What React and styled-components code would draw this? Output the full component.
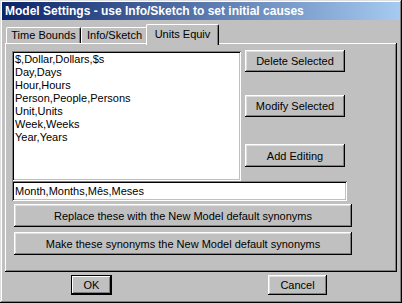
import React from "react";
import styled, { createGlobalStyle } from "styled-components";

const GlobalStyle = createGlobalStyle`
  html, body {
    margin: 0;
    padding: 0;
    background: #c0c0c0;
  }
  * {
    box-sizing: border-box;
  }
`;

const face = "#c0c0c0";

const Window = styled.div`
  width: 402px;
  height: 303px;
  background: ${face};
  font-family: "Liberation Sans", Arial, sans-serif;
  font-size: 11px;
  color: #000;
  box-shadow: inset -1px -1px #000, inset 1px 1px #dfdfdf,
    inset -2px -2px #808080, inset 2px 2px #fff;
  padding: 2px;
  display: flex;
  flex-direction: column;
`;

const TitleBar = styled.div`
  height: 18px;
  background: linear-gradient(to right, #0a246a, #a6caf0);
  color: #fff;
  font-family: "Liberation Sans", Arial, sans-serif;
  font-weight: bold;
  font-size: 12px;
  line-height: 18px;
  padding-left: 3px;
  white-space: nowrap;
  overflow: hidden;
`;

const Body = styled.div`
  padding: 4px 3px 0 3px;
  display: flex;
  flex-direction: column;
`;

const Tabs = styled.div`
  display: flex;
  align-items: flex-end;
  height: 19px;
  padding-left: 1px;
  position: relative;
  z-index: 1;
`;

const Tab = styled.div`
  width: ${(p) => p.$w}px;
  height: ${(p) => (p.$active ? 21 : 16)}px;
  margin: ${(p) => (p.$active ? "0 -2px -2px -2px" : "0")};
  background: ${face};
  border-top: 1px solid #fff;
  border-left: 1px solid #fff;
  border-right: 1px solid #000;
  border-radius: 2px 2px 0 0;
  box-shadow: inset -1px 0 #808080;
  display: flex;
  align-items: flex-start;
  justify-content: center;
  padding-top: ${(p) => (p.$active ? 3 : 1)}px;
  line-height: 13px;
  white-space: nowrap;
`;

const Panel = styled.div`
  height: 229px;
  background: ${face};
  box-shadow: inset -1px -1px #000, inset 1px 1px #fff,
    inset -2px -2px #808080;
  padding: 8px 0 0 7px;
  display: flex;
  flex-direction: column;
`;

const TopRow = styled.div`
  display: flex;
  gap: 4px;
`;

const ListBox = styled.div`
  width: 229px;
  height: 130px;
  background: #fff;
  box-shadow: inset 1px 1px #808080, inset -1px -1px #fff,
    inset 2px 2px #000, inset -2px -2px ${face};
  padding: 2px 3px;
  line-height: 13px;
  white-space: nowrap;
`;

const SideButtons = styled.div`
  display: flex;
  flex-direction: column;
  margin-top: -1px;
`;

const Button = styled.button`
  width: ${(p) => p.$w}px;
  height: ${(p) => p.$h || 22}px;
  margin: ${(p) => p.$m || "0"};
  background: ${face};
  border: none;
  padding: 0;
  font-family: "Liberation Sans", Arial, sans-serif;
  font-size: 11px;
  color: #000;
  box-shadow: ${(p) =>
    p.$default
      ? `inset 0 0 0 1px #000, inset -2px -2px #000, inset 2px 2px #fff, inset -3px -3px #808080`
      : `inset -1px -1px #000, inset 1px 1px #fff, inset -2px -2px #808080, inset 2px 2px #dfdfdf`};
  white-space: nowrap;
`;

const TextField = styled.input`
  width: 335px;
  height: 20px;
  border: none;
  outline: none;
  background: #fff;
  box-shadow: inset 1px 1px #808080, inset -1px -1px #fff,
    inset 2px 2px #000, inset -2px -2px ${face};
  padding: 0 2px 0 3px;
  font-family: "Liberation Sans", Arial, sans-serif;
  font-size: 11px;
  color: #000;
`;

const Footer = styled.div`
  display: flex;
  padding: 3px 0 0 66px;
`;

const units = [
  "$,Dollar,Dollars,$s",
  "Day,Days",
  "Hour,Hours",
  "Person,People,Persons",
  "Unit,Units",
  "Week,Weeks",
  "Year,Years",
];

export default function App() {
  return (
    <>
      <GlobalStyle />
      <Window>
        <TitleBar>Model Settings - use Info/Sketch to set initial causes</TitleBar>
        <Body>
          <Tabs>
            <Tab $w={75}>Time Bounds</Tab>
            <Tab $w={67}>Info/Sketch</Tab>
            <Tab $w={73} $active>
              Units Equiv
            </Tab>
          </Tabs>
          <Panel>
            <TopRow>
              <ListBox>
                {units.map((u) => (
                  <div key={u}>{u}</div>
                ))}
              </ListBox>
              <SideButtons>
                <Button $w={100}>Delete Selected</Button>
                <Button $w={100} $m="23px 0 0 0">
                  Modify Selected
                </Button>
                <Button $w={100} $h={23} $m="27px 0 0 0">
                  Add Editing
                </Button>
              </SideButtons>
            </TopRow>
            <TextField defaultValue="Month,Months,Mês,Meses" readOnly />
            <Button $w={338} $h={23} $m="3px 0 0 2px">
              Replace these with the New Model default synonyms
            </Button>
            <Button $w={338} $h={23} $m="5px 0 0 2px">
              Make these synonyms the New Model default synonyms
            </Button>
          </Panel>
          <Footer>
            <Button $w={41} $h={20} $default>
              OK
            </Button>
            <Button $w={59} $h={20} $m="0 0 0 156px">
              Cancel
            </Button>
          </Footer>
        </Body>
      </Window>
    </>
  );
}
